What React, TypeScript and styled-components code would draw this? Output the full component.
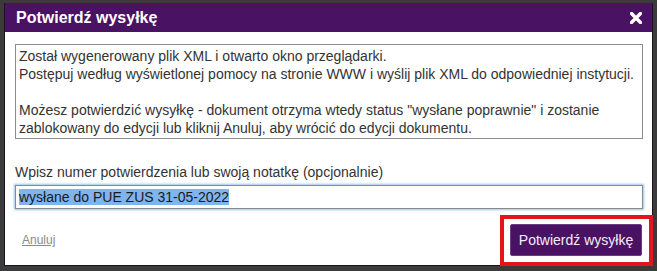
import React from "react";
import styled, { createGlobalStyle } from "styled-components";

const Global = createGlobalStyle`
  html, body { margin: 0; padding: 0; }
  body {
    background: #3b3b3b;
    font-family: "Liberation Sans", Arial, sans-serif;
    width: 657px;
    height: 271px;
    overflow: hidden;
  }
`;

const Stage = styled.div`
  position: relative;
  width: 657px;
  height: 271px;
  padding: 3px 4px;
  box-sizing: border-box;
`;

const Dialog = styled.div`
  width: 649px;
  height: 263px;
  box-sizing: border-box;
  border: 1px solid #1c1220;
  border-top: none;
  background: #fff;
  display: flex;
  flex-direction: column;
`;

const Header = styled.div`
  height: 29px;
  background: #4a1263;
  display: flex;
  align-items: center;
  justify-content: space-between;
  padding: 0 10px 0 11px;
  flex-shrink: 0;
`;

const Title = styled.h1`
  margin: 0;
  font-size: 16px;
  font-weight: bold;
  color: #fff;
  line-height: 20px;
`;

const Close = styled.button`
  border: 0;
  background: none;
  padding: 0;
  width: 12px;
  height: 12px;
  display: flex;
  cursor: pointer;
`;

const Body = styled.div`
  padding: 12px 9px 0 10px;
  display: flex;
  flex-direction: column;
`;

const Message = styled.div`
  box-sizing: border-box;
  height: 95px;
  border: 1px solid #8c8c8c;
  padding: 2px 3px;
  font-size: 14px;
  line-height: 18px;
  color: #333;
`;

const Label = styled.label`
  margin-top: 24px;
  font-size: 14px;
  line-height: 18px;
  color: #333;
`;

const Field = styled.div`
  margin-top: 4px;
  box-sizing: border-box;
  height: 24px;
  border: 1px solid #8a8a8a;
  box-shadow: 0 0 2px 1px #9cc4ee;
  padding: 0 3px;
  display: flex;
  align-items: center;
  font-size: 14px;
  color: #1a1a1a;
`;

const Selected = styled.span`
  background: #7fb4ee;
  line-height: 16px;
`;

const Footer = styled.div`
  margin-top: 15px;
  display: flex;
  align-items: center;
  justify-content: space-between;
`;

const Cancel = styled.a`
  margin-left: 7px;
  font-size: 12px;
  color: #8a8a8a;
  text-decoration: underline;
  cursor: pointer;
`;

const Confirm = styled.button`
  height: 32px;
  width: 132px;
  background: #4a1263;
  color: #f2eef5;
  border: 1px solid #6a3a82;
  border-radius: 2px;
  font-family: "Liberation Sans", Arial, sans-serif;
  font-size: 14px;
  padding: 0;
  margin-right: 1px;
  cursor: pointer;
`;

const Highlight = styled.div`
  position: absolute;
  left: 500px;
  top: 215px;
  width: 153px;
  height: 51px;
  box-sizing: border-box;
  border: 4px solid #e5141c;
  pointer-events: none;
`;

export default function App() {
  return (
    <Stage>
      <Global />
      <Dialog>
        <Header>
          <Title>Potwierdź wysyłkę</Title>
          <Close aria-label="Zamknij">
            <svg width="12" height="12" viewBox="0 0 12 12">
              <path d="M1.5 1.5 L10.5 10.5 M10.5 1.5 L1.5 10.5" stroke="#fff" strokeWidth="3.4" strokeLinecap="square" />
            </svg>
          </Close>
        </Header>
        <Body>
          <Message>
            Został wygenerowany plik XML i otwarto okno przeglądarki.
            <br />
            Postępuj według wyświetlonej pomocy na stronie WWW i wyślij plik XML do odpowiedniej instytucji.
            <br />
            <br />
            Możesz potwierdzić wysyłkę - dokument otrzyma wtedy status "wysłane poprawnie" i zostanie zablokowany do edycji lub kliknij Anuluj, aby wrócić do edycji dokumentu.
          </Message>
          <Label>Wpisz numer potwierdzenia lub swoją notatkę (opcjonalnie)</Label>
          <Field>
            <Selected>wysłane do PUE ZUS 31-05-2022</Selected>
          </Field>
          <Footer>
            <Cancel>Anuluj</Cancel>
            <Confirm>Potwierdź wysyłkę</Confirm>
          </Footer>
        </Body>
      </Dialog>
      <Highlight />
    </Stage>
  );
}
